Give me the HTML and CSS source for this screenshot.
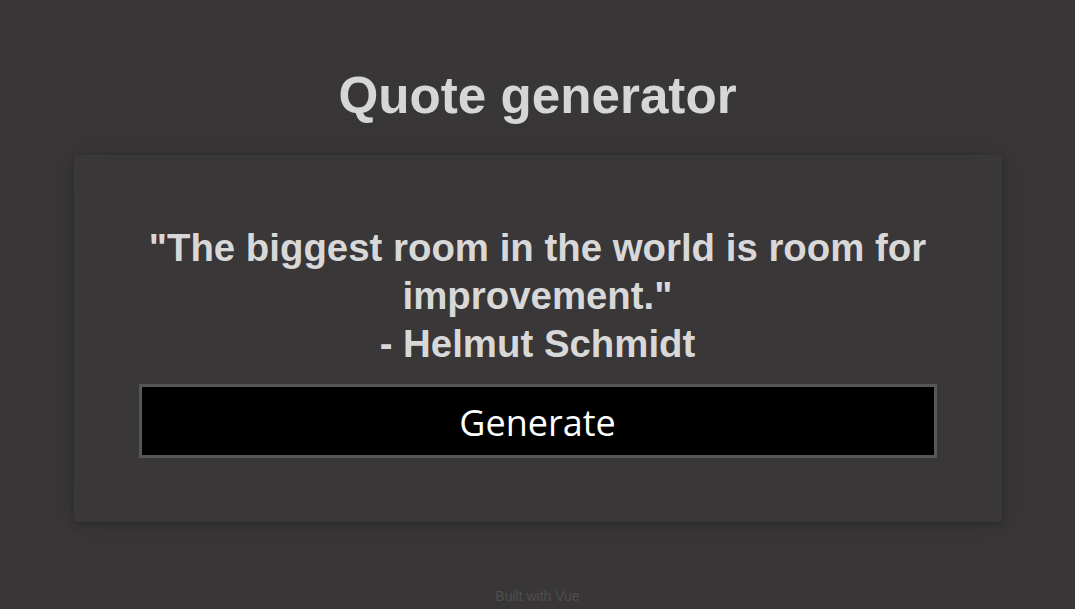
FILE: index.html
```html
<!DOCTYPE html>
<html lang="en">
<head>
<meta charset="utf-8">
<title>Quote generator</title>
<link rel="stylesheet" href="styles.css">
</head>
<body>
<div class="app">
  <h1 class="title">Quote generator</h1>
  <div class="card">
    <p class="quote">"The biggest room in the world is room for improvement."<br>- Helmut Schmidt</p>
    <button class="generate">Generate</button>
  </div>
</div>
<footer class="footer">Built with Vue</footer>
</body>
</html>
```
FILE: styles.css
```css
html, body {
  margin: 0;
  padding: 0;
  height: 100%;
}
body {
  background: #383637;
  font-family: "Liberation Sans", Arial, sans-serif;
  color: #d9d9d9;
  display: flex;
  flex-direction: column;
  align-items: center;
}
.app {
  display: flex;
  flex-direction: column;
  align-items: center;
  flex: 1;
}
.title {
  margin: 66px 0 30px;
  font-size: 51.2px;
  font-weight: bold;
  line-height: 59px;
  color: #d6d6d6;
}
.card {
  width: 798px;
  padding: 69px 65px 64px;
  background: #393738;
  border-radius: 3px;
  box-shadow: 0 2px 6px rgba(0,0,0,0.18), 0 0 40px rgba(0,0,0,0.12);
  display: flex;
  flex-direction: column;
}
.quote {
  margin: 0 0 16px;
  text-align: center;
  font-size: 38.4px;
  line-height: 48px;
  font-weight: bold;
  color: #d8d8d8;
}
.generate {
  height: 74px;
  background: #000;
  border: 3px solid #575757;
  color: #fff;
  font-family: "Open Sans", "DejaVu Sans", sans-serif;
  font-size: 36px;
  padding: 3px 0 0;
  cursor: pointer;
}
.footer {
  font-size: 14px;
  line-height: 16px;
  color: #504e4f;
  padding-bottom: 5px;
}
```
